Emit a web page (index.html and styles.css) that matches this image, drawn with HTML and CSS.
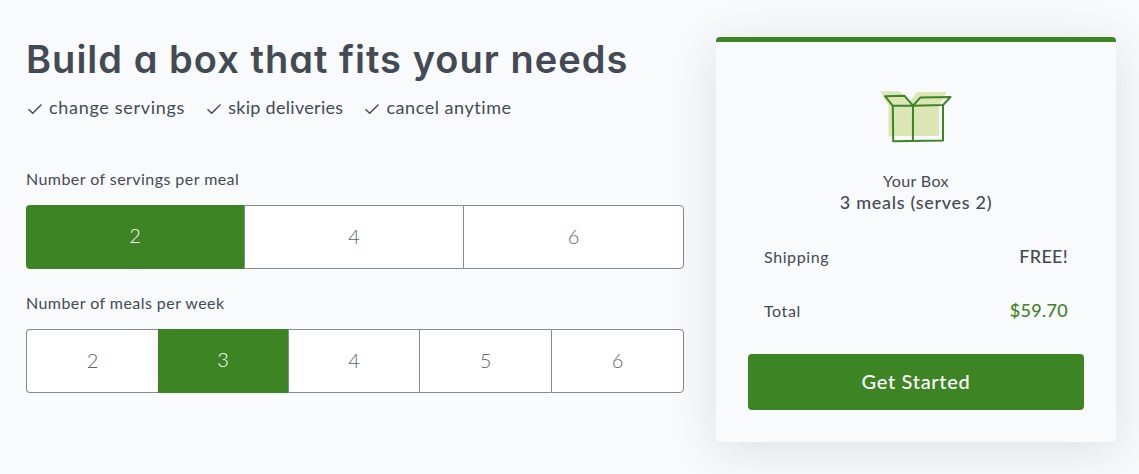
FILE: index.html
```html
<!DOCTYPE html>
<html lang="en">
<head>
    <meta charset="utf-8">
    <title>Build a box</title>
    <link rel="stylesheet" href="styles.css">
</head>
<body>

    <main class="page">

        <!-- Plan picker -->
        <section class="plan">
            <h1>Build a box that fits your needs</h1>
            <ul class="perks">
                <li>
                    <svg class="check" viewBox="0 0 16 12"><path d="M1.5 6.2 5.7 10.2 14.5 1.5"/></svg>
                    <span>change servings</span>
                </li>
                <li class="skip">
                    <svg class="check" viewBox="0 0 16 12"><path d="M1.5 6.2 5.7 10.2 14.5 1.5"/></svg>
                    <span>skip deliveries</span>
                </li>
                <li class="cancel">
                    <svg class="check" viewBox="0 0 16 12"><path d="M1.5 6.2 5.7 10.2 14.5 1.5"/></svg>
                    <span>cancel anytime</span>
                </li>
            </ul>

            <h2>Number of servings per meal</h2>
            <div class="options servings">
                <div class="option selected">2</div>
                <div class="option">4</div>
                <div class="option">6</div>
            </div>

            <h2 class="meals-title">Number of meals per week</h2>
            <div class="options meals">
                <div class="option">2</div>
                <div class="option selected">3</div>
                <div class="option">4</div>
                <div class="option">5</div>
                <div class="option">6</div>
            </div>
        </section>

        <!-- Order summary -->
        <aside class="summary">
            <svg class="box-icon" viewBox="0 0 74 54">
                <path class="box-fill" d="M0 1.2 20 1.5 29.5 12 37 2.3 66.5 2 59 15.5V46H8.500V15.500Z"/>
                <path class="box-line" d="M12.800 15.800 5 6.200 24.500 5.800 33 15.700 40.500 7.400 70.500 7.100 63 15 33 15.700Z"/>
                <path class="box-line" d="M12.800 15.800 13.200 51.200 63 50.400V15M33 15.700 32.900 50.800"/>
            </svg>
            <p class="your-box">Your Box</p>
            <p class="box-detail">3 meals (serves 2)</p>
            <div class="row">
                <span class="label">Shipping</span>
                <span class="value">FREE!</span>
            </div>
            <div class="row">
                <span class="label">Total</span>
                <span class="value price">$59.70</span>
            </div>
            <button type="button">Get Started</button>
        </aside>

    </main>

</body>
</html>
```
FILE: styles.css
```css
* {
    box-sizing: border-box;
}
body {
    margin: 0;
    background: #f8fafc;
    color: #434a54;
    font-family: Lato, "Liberation Sans", sans-serif;
}
h1, h2, p, ul {
    margin: 0;
    padding: 0;
}
.page {
    display: flex;
    gap: 32px;
    height: 474px;
    padding: 37px 23px 0 26px;
    overflow: hidden;
}
.plan {
    width: 658px;
}
h1 {
    height: 46px;
    line-height: 45px;
    font-family: Inter, Lato, sans-serif;
    font-size: 38px;
    font-weight: 600;
    font-feature-settings: "cv11";
    letter-spacing: 1.03px;
    white-space: nowrap;
}
.perks {
    display: flex;
    gap: 20px;
    height: 24px;
    margin-top: 12px;
    list-style: none;
    font-size: 18px;
    line-height: 24px;
    letter-spacing: 0.7px;
    white-space: nowrap;
}
.perks li {
    display: flex;
    align-items: center;
    gap: 6px;
}
.perks .skip {
    letter-spacing: 0.3px;
}
.perks .cancel {
    letter-spacing: 0.54px;
}
.check {
    width: 16px;
    height: 12px;
    margin: 3px 0 0 1px;
    fill: none;
    stroke: #434a54;
    stroke-width: 1.4;
}
h2 {
    height: 20px;
    margin: 50px 0 16px;
    line-height: 20px;
    font-size: 16px;
    font-weight: 400;
    letter-spacing: 0.44px;
}
.meals-title {
    margin-top: 24px;
}
.options {
    display: grid;
    height: 64px;
}
.servings {
    grid-template-columns: 218px 219px 1fr;
}
.meals {
    grid-template-columns: 132px 130px 131px 132px 1fr;
}
.option {
    border: 1px solid #868a92;
    border-right: 0;
    background: white;
    color: #5e646e;
    font-size: 20px;
    font-weight: 300;
    line-height: 61px;
    text-align: center;
}
.option:first-child {
    border-radius: 4px 0 0 4px;
}
.option:last-child {
    border-right: 1px solid #868a92;
    border-radius: 0 4px 4px 0;
}
.option.selected {
    border: 0;
    background: #3d8425;
    color: white;
}
.summary {
    width: 400px;
    height: 405px;
    padding: 48px 32px 0;
    border-top: 5px solid #3d8425;
    border-radius: 4px;
    background: #f8fafc;
    box-shadow: 0 8px 48px rgba(50, 80, 100, 0.14);
    text-align: center;
}
.box-icon {
    display: block;
    width: 74px;
    height: 54px;
    margin: 0 auto 27px;
    position: relative;
    left: 1px;
}
.box-fill {
    fill: #dce6b5;
}
.box-line {
    fill: none;
    stroke: #3d8425;
    stroke-width: 2;
    stroke-linejoin: round;
}
.your-box {
    font-size: 16px;
    line-height: 20px;
    letter-spacing: 0.4px;
}
.box-detail {
    margin-bottom: 32px;
    font-size: 18px;
    font-weight: 500;
    line-height: 22px;
    letter-spacing: 0.7px;
}
.row {
    display: flex;
    justify-content: space-between;
    height: 24px;
    margin-bottom: 30px;
    padding: 0 16px;
    font-size: 16px;
    line-height: 24px;
}
.row + .row {
    margin-bottom: 31px;
}
.label {
    letter-spacing: 0.6px;
}
.value {
    font-size: 18px;
    font-weight: 500;
    line-height: 22px;
    letter-spacing: 0.3px;
}
.price {
    color: #3d8425;
}
button {
    display: block;
    width: 336px;
    height: 56px;
    padding: 0 0 2px;
    border: 0;
    border-radius: 4px;
    background: #3d8425;
    color: white;
    font-family: inherit;
    font-size: 20px;
    font-weight: 500;
    letter-spacing: 0.7px;
}
```
